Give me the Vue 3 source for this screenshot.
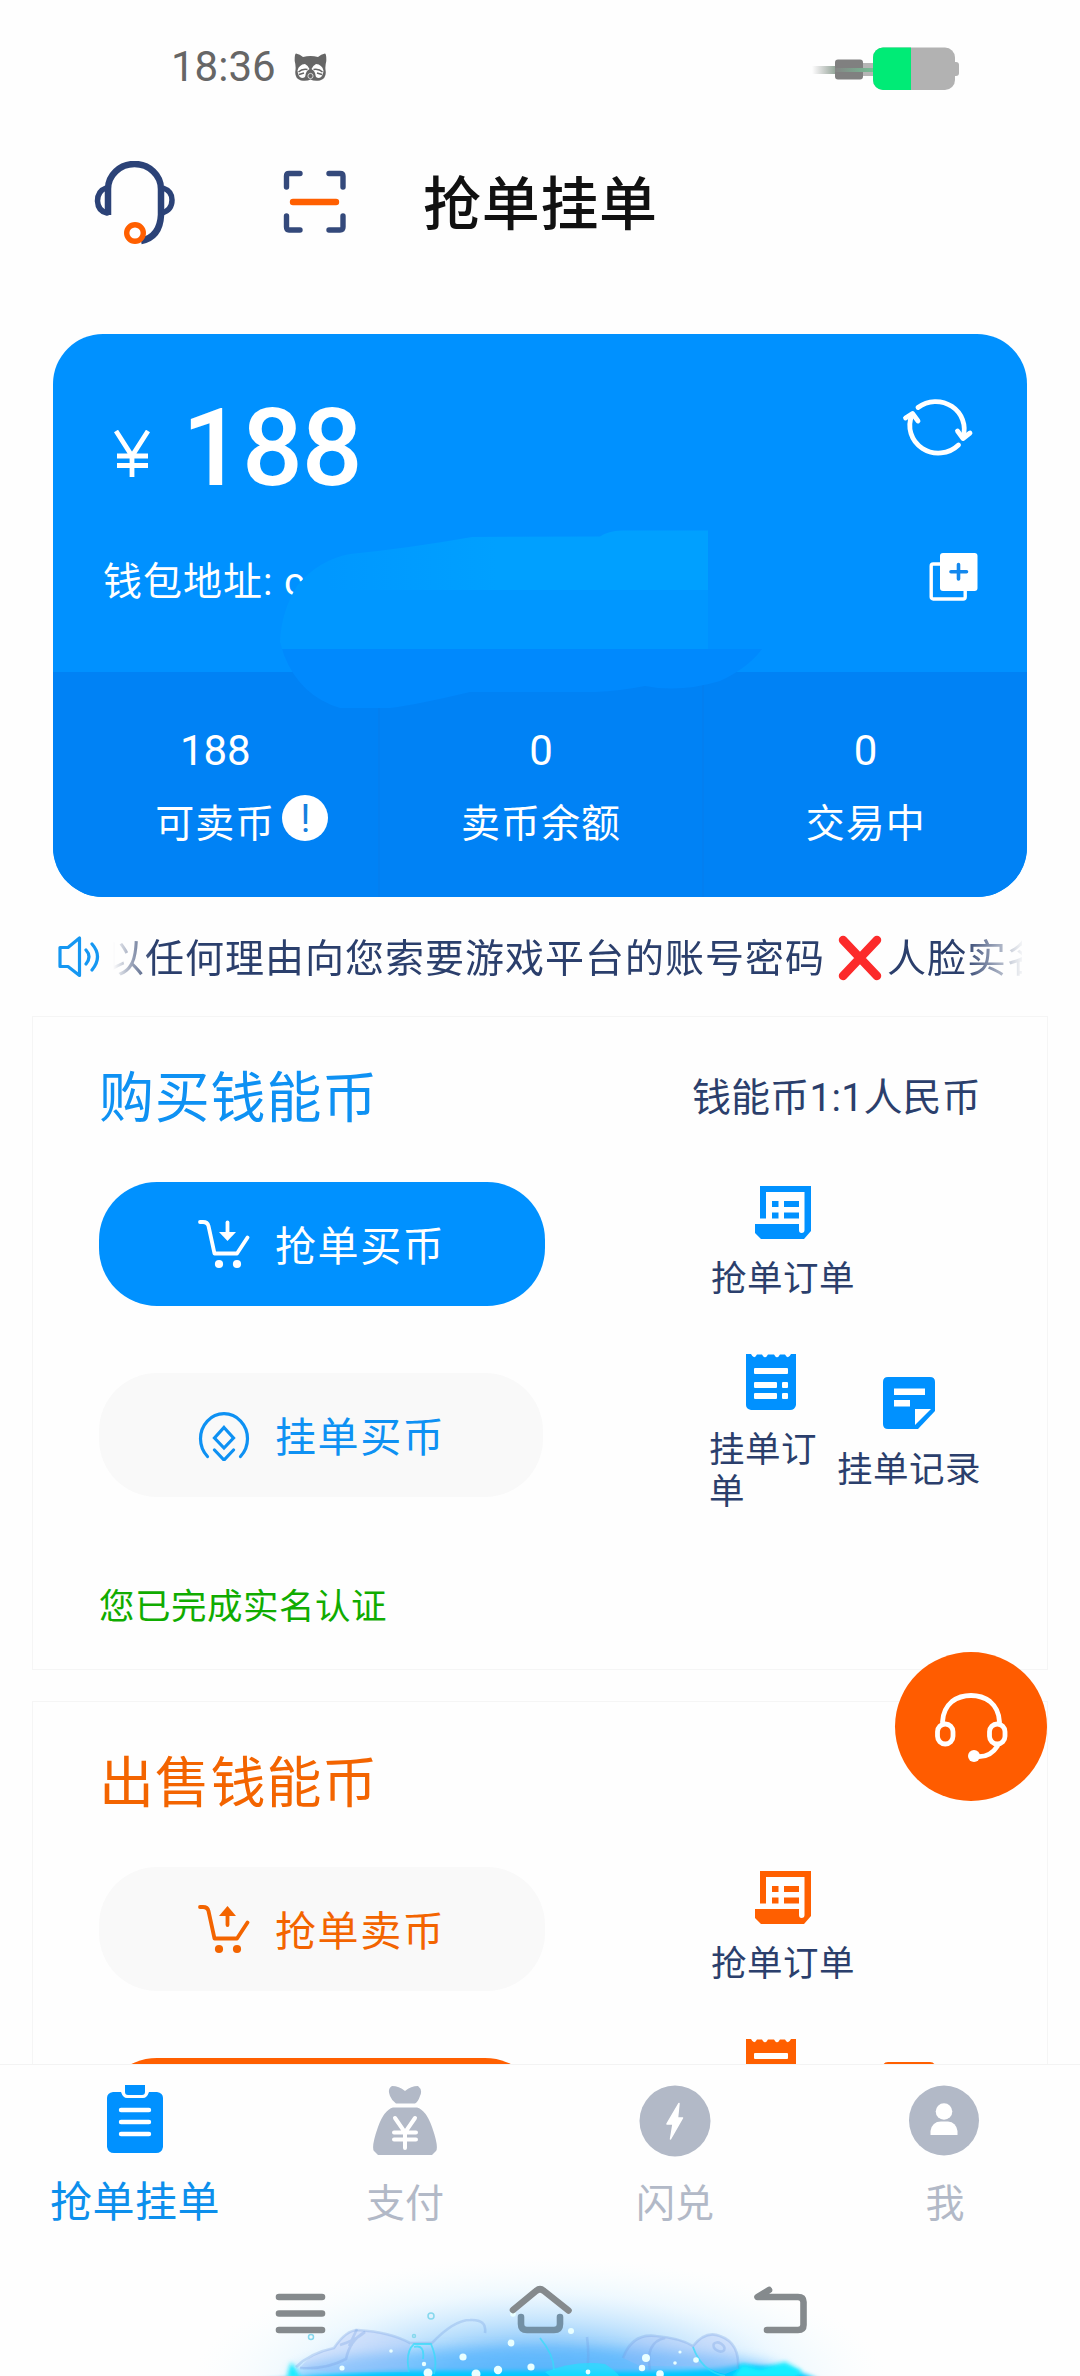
<script setup>
const stats = [
  { value: '188', label: '可卖币', info: true },
  { value: '0', label: '卖币余额' },
  { value: '0', label: '交易中' },
]

const sections = [
  {
    tone: 'buy',
    title: '购买钱能币',
    note: '钱能币1:1人民币',
    grab: { label: '抢单买币', filled: true },
    post: { label: '挂单买币', filled: false },
    status: '您已完成实名认证',
  },
  {
    tone: 'sell',
    title: '出售钱能币',
    note: '',
    grab: { label: '抢单卖币', filled: false },
    post: { label: '', filled: true },
    status: '',
  },
]

const bubbles = [
  [463, 2357, 3.6], [511, 2343, 3.4], [498, 2370, 4.2], [531, 2367, 3.6], [476, 2374, 4.5], [424, 2364, 2.2],
  [428, 2373, 4.5], [391, 2351, 1.8], [342, 2368, 2.6], [646, 2358, 4], [642, 2368, 3.2], [660, 2374, 3.8],
  [571, 2331, 3], [696, 2360, 2.8], [680, 2352, 1.6], [675, 2363, 1.8], [588, 2372, 2.4], [513, 2314, 2.8],
]
</script>

<template>
  <div class="page">
    <main class="scroll">
      <div class="status-bar">
        <span class="clock">18:36</span>
        <svg class="cat" width="33" height="28" viewBox="0 0 33 28">
          <path d="M2 .5 Q6 1 9 4 Q16.500 2 24 4 Q27 1 31 .5 Q32.500 1 32.300 8 Q31 13 31.500 17 Q33 25 26 27.500 Q20 28.500 16.500 26.500 Q13 28.500 7 27.500 Q0 25 1.500 17 Q2 13 .7 8 Q.5 1 2 .5Z" fill="#666" />
          <path d="M3.500 17.500 Q5 11.500 11 11 Q14 12.500 15.500 16 Q12 18 11.500 22 Q11.500 25 8 25 Q4 24 3.500 17.500Z M29.500 17.500 Q28 11.500 22 11 Q19 12.500 17.500 16 Q21 18 21.500 22 Q21.500 25 25 25 Q29 24 29.500 17.500Z" fill="#fff" />
          <path d="M4.500 19 Q8 15.500 13.500 16.500 M28.500 19 Q25 15.500 19.500 16.500 M5 21.500 L10 20 M28 21.500 L23 20" fill="none" stroke="#666" stroke-width="1.400" />
          <circle cx="16.500" cy="23" r="2.600" fill="#666" stroke="#eee" stroke-width=".8" />
        </svg>
        <svg class="battery" width="148" height="46" viewBox="812 46 148 46">
          <defs>
            <linearGradient id="tail"><stop offset="0" stop-color="#999" stop-opacity="0" /><stop offset="1" stop-color="#90a596" /></linearGradient>
            <linearGradient id="wire"><stop offset="0" stop-color="#858585" /><stop offset="1" stop-color="#75bd94" /></linearGradient>
            <clipPath id="cell"><rect x="873" y="47.500" width="82" height="42.500" rx="10" /></clipPath>
          </defs>
          <rect x="812" y="66" width="24" height="8" fill="url(#tail)" />
          <rect x="860" y="63" width="16" height="13" fill="#b5b5b5" />
          <rect x="835" y="59.500" width="28" height="20" rx="3" fill="#808080" />
          <rect x="835" y="68" width="38" height="4" fill="url(#wire)" />
          <rect x="950" y="62" width="9" height="14" rx="3" fill="#b2b2b2" />
          <g clip-path="url(#cell)">
            <rect x="873" y="47" width="82" height="44" fill="#b2b2b2" />
            <rect x="873" y="47" width="38" height="44" fill="#00eb76" />
          </g>
        </svg>
      </div>

      <header class="header">
        <svg class="headset" width="84" height="84" viewBox="94 160 84 84">
          <g fill="none" stroke="#2b4277" stroke-width="6.500">
            <path d="M108 214 V188 A26.500 25 0 0 1 161 188 V214 Q160 236 141 240" />
            <path d="M106 187 Q97.500 190 97.500 200 Q98 210 107 212" stroke-width="5.500" stroke-linecap="round" />
            <path d="M163 187 Q172 190 172 199 Q172 209 162 212" stroke-width="5.500" />
          </g>
          <circle cx="135" cy="232" r="8.300" fill="#fff" stroke="#ff5f00" stroke-width="5.400" />
        </svg>
        <svg class="scan" width="64" height="64" viewBox="283 170 64 64">
          <path d="M286.500 187 V176 Q286.500 173.500 289 173.500 H300 M329 173.500 H340 Q343 173.500 343 176 V187 M286.500 216 V227 Q286.500 230 289 230 H300 M329 230 H340 Q343 230 343 227 V216" fill="none" stroke="#34497b" stroke-width="5.400" stroke-linecap="round" stroke-linejoin="round" />
          <path d="M293 202 H336" stroke="#ff5f00" stroke-width="6.400" stroke-linecap="round" />
        </svg>
        <h1 class="title">抢单挂单</h1>
      </header>

      <section class="wallet">
        <div class="wallet-top">
          <div class="balance">
            <svg class="yen" width="36" height="48" viewBox="0 0 36 48">
              <path d="M2 1 L18 26 L34 1 M18 26 V47 M3 26 H34 M3 35.500 H34" fill="none" stroke="#fff" stroke-width="4.800" />
            </svg>
            <strong class="amount">188</strong>
            <svg class="refresh" width="72" height="66" viewBox="902 394 72 66">
              <g fill="none" stroke="#fff" stroke-width="4.800" stroke-linecap="round" stroke-linejoin="round">
                <path d="M918 408.500 A28.500 27.500 0 0 1 963 438 M905.500 419 L912.500 414.500 L918 422" />
                <path d="M958.500 446 A28.500 27.500 0 0 1 912 416 M957.500 432 L963 439.500 L970 434" />
              </g>
            </svg>
          </div>
          <div class="address">
            <span>钱包地址: c</span>
            <svg class="copy" width="50" height="50" viewBox="0 0 50 50">
              <rect x="2.200" y="12" width="34" height="35" rx="2" fill="none" stroke="#fff" stroke-width="3.400" />
              <rect x="11" y="1" width="37.500" height="38" rx="3" fill="#fff" />
              <path d="M29.500 12.500 V27 M22 19.700 H37.500" stroke="#1388ee" stroke-width="3.600" stroke-linecap="round" />
            </svg>
          </div>
        </div>
        <div class="stats">
          <div v-for="stat in stats" :key="stat.label" class="stat">
            <span class="stat-value">{{ stat.value }}</span>
            <span class="stat-label">{{ stat.label }}<i v-if="stat.info" class="info">!</i></span>
          </div>
        </div>
        <svg class="smudge" width="482" height="178" viewBox="280 530 482 178">
          <defs>
            <clipPath id="blot">
              <path d="M280 642 Q281 612 297 586 Q318 560 350 554 Q410 548 472 537 L600 536.500 Q608 531 622 530.500 H708 V649 H762 Q748 668 720 681 Q680 693 645 686 Q620 691 595 692 H470 Q420 704 390 708 H340 Q300 696 284 655Z" />
            </clipPath>
            <linearGradient id="band">
              <stop offset=".1" stop-color="#0098ff" />
              <stop offset=".45" stop-color="#00a0ff" />
            </linearGradient>
          </defs>
          <g clip-path="url(#blot)">
            <rect x="280" y="530" width="482" height="60" fill="url(#band)" />
            <rect x="280" y="590" width="482" height="59" fill="#0097ff" />
            <rect x="280" y="649" width="482" height="60" fill="#0089fd" />
          </g>
        </svg>
      </section>

      <div class="notice">
        <svg width="44" height="42" viewBox="0 0 44 42">
          <g fill="none" stroke="#1597f2" stroke-width="3.200" stroke-linejoin="round" stroke-linecap="round">
            <path d="M2 11.500 H10 L21.500 2 V39.500 L10 30.500 H2Z" />
            <path d="M28 14 Q34 20.500 28 28 M34 8 Q45 20.500 34 34" />
          </g>
        </svg>
        <div class="ticker">
          <span>以任何理由向您索要游戏平台的账号密码</span>
          <svg class="cross" width="46" height="46" viewBox="0 0 46 46">
            <path d="M6 5 L40 41 M40 5 L6 41" stroke="#fc2b2b" stroke-width="8.500" stroke-linecap="round" />
          </svg>
          <span>人脸实名</span>
        </div>
      </div>

      <section v-for="s in sections" :key="s.tone" class="panel" :class="s.tone">
        <div class="panel-head">
          <h2>{{ s.title }}</h2>
          <span class="note">{{ s.note }}</span>
        </div>

        <div class="row">
          <button class="pill" :class="{ filled: s.grab.filled }">
            <svg width="52" height="50" viewBox="0 0 52 50">
              <g fill="none" stroke="currentColor" stroke-width="3.800" stroke-linecap="round" stroke-linejoin="round">
                <path d="M2 3 H5 Q9.500 3 10.500 7 L16.500 34.500 H39 L49.500 18.500" />
                <path :d="s.tone === 'buy' ? 'M29.500 3.500 V14' : 'M29.500 12 V21'" />
              </g>
              <path :d="s.tone === 'buy' ? 'M21 13 H38 L29.500 22Z' : 'M21 12 H38 L29.500 2Z'" fill="currentColor" />
              <circle cx="21" cy="45" r="4.100" fill="currentColor" />
              <circle cx="39" cy="45" r="4.100" fill="currentColor" />
            </svg>
            <span>{{ s.grab.label }}</span>
          </button>
          <div class="links">
            <a class="link">
              <svg width="58" height="56" viewBox="0 0 58 56">
                <path fill="currentColor" fill-rule="evenodd" d="M6 1 H57 V46 L50 54 H7 L1 48 V39 H45 V45 Q45 48 47.500 48 Q50.500 48 50.500 45 V7 H12 V33.500 H6Z" />
                <path fill="currentColor" d="M18 16 h6.500 v6 h-6.500z M30 16 h15 v6 h-15z M18 27.500 h6.500 v6 h-6.500z M30 27.500 h15 v6 h-15z" />
              </svg>
              <span>抢单订单</span>
            </a>
          </div>
        </div>

        <div class="row second">
          <button class="pill" :class="{ filled: s.post.filled }">
            <svg width="52" height="52" viewBox="0 0 52 52">
              <g fill="none" stroke="currentColor" stroke-width="3.200" stroke-linecap="round" stroke-linejoin="miter">
                <path d="M9.500 47.500 A23.500 25 0 1 1 42.500 47.500" />
                <path d="M26 18.500 L35.500 29 L26 39 L16.500 29Z M16.500 41 L26 51 L35.500 41" />
              </g>
            </svg>
            <span>{{ s.post.label }}</span>
          </button>
          <div class="links">
            <a class="link narrow">
              <svg width="52" height="58" viewBox="0 0 52 58">
                <path fill="currentColor" d="M1 1 H6 Q9 7 12 1.500 H17 Q20 7 23 1.500 H29 Q32 7 35 1.500 H40 Q43 7 46 1 H51 V52 Q50 57 45 57 H6 Q1 56 1 52Z" />
                <g fill="#fff">
                  <rect x="9" y="15" width="34" height="6" rx="1" />
                  <rect x="9" y="29" width="23" height="6" rx="1" />
                  <rect x="37" y="29" width="6" height="6" rx="1" />
                  <rect x="9" y="40" width="23" height="6" rx="1" />
                  <rect x="37" y="40" width="6" height="6" rx="1" />
                </g>
              </svg>
              <span>{{ s.tone === 'buy' ? '挂单订单' : '' }}</span>
            </a>
            <a class="link">
              <svg width="54" height="54" viewBox="0 0 54 54">
                <path fill="currentColor" d="M6 1 H48 Q53 1 53 6 V35 L36 53 H6 Q1 53 1 48 V6 Q1 1 6 1Z" />
                <path fill="#fff" d="M12 12.500 H43 V19 H12Z M12 24 H28 V30.500 H12Z M33 33 H49 L33 49Z" />
              </svg>
              <span class="wide">{{ s.tone === 'buy' ? '挂单记录' : '' }}</span>
            </a>
          </div>
        </div>
        <p v-if="s.status" class="verified">{{ s.status }}</p>
      </section>
    </main>

    <nav class="tabs">
      <a class="tab active">
        <svg width="58" height="70" viewBox="0 0 58 70">
          <path fill="currentColor" d="M7 8 H15 Q17 14 21 14 H37 Q41 14 43 8 H51 Q57 9 57 14 V63 Q56 69 50 69 H8 Q2 69 1 63 V14 Q1 9 7 8Z M19 1 H39 V8 Q39 11 36 11 H22 Q19 11 19 8Z" />
          <path d="M15 26 H43 M15 38 H43 M15 50 H43" stroke="#fff" stroke-width="4.400" stroke-linecap="round" />
        </svg>
        <span>抢单挂单</span>
      </a>
      <a class="tab">
        <svg width="66" height="70" viewBox="0 0 66 70">
          <path fill="currentColor" d="M20 0 Q27 0 33 5 Q39 0 46 0 Q51 4 48 10 Q46 16 43 17.500 H24 Q20 15 18 10 Q15 3 20 0Z M21 21.500 H45 Q54 24 60 41 Q67 61 64 65 L60 69 H6 L2 65 Q-1 61 6 41 Q12 24 21 21.500Z" />
          <path d="M23 32 L33 46.500 L43 32 M33 46.500 V62 M22 46.500 H44 M22 53.500 H44" fill="none" stroke="#fff" stroke-width="4" stroke-linecap="round" />
        </svg>
        <span>支付</span>
      </a>
      <a class="tab">
        <svg width="72" height="72" viewBox="0 0 72 72">
          <circle cx="36" cy="36" r="35.500" fill="currentColor" />
          <path fill="#fff" stroke="#fff" stroke-width="1.500" stroke-linejoin="round" d="M40 18.500 L28 39 H34 L31.500 54 L43.500 33 H38.500Z" />
        </svg>
        <span>闪兑</span>
      </a>
      <a class="tab">
        <svg width="72" height="72" viewBox="0 0 72 72">
          <circle cx="35" cy="35.500" r="35" fill="currentColor" />
          <circle cx="35" cy="26.500" r="8.300" fill="#fff" />
          <path fill="#fff" d="M21.500 50 V46 Q23 36.500 32 36.500 H39 Q47 37 48.500 46 V50Z" />
        </svg>
        <span>我</span>
      </a>
    </nav>

    <footer class="system">
      <svg class="glow" width="1080" height="156" viewBox="0 2220 1080 156">
        <defs>
          <radialGradient id="haze" cx="0" cy="0" r="350" gradientUnits="userSpaceOnUse" gradientTransform="translate(540 2386) scale(1 .37)">
            <stop offset="0" stop-color="#58aef8" />
            <stop offset=".3" stop-color="#84c5fb" />
            <stop offset=".5" stop-color="#b9dffd" stop-opacity=".85" />
            <stop offset=".72" stop-color="#e2f4ff" stop-opacity=".55" />
            <stop offset="1" stop-color="#f4fdff" stop-opacity="0" />
          </radialGradient>
          <filter id="soft" x="-20%" y="-80%" width="140%" height="260%"><feGaussianBlur stdDeviation="6" /></filter>
          <filter id="blur" x="-10%" y="-80%" width="120%" height="260%"><feGaussianBlur stdDeviation="2" /></filter>
        </defs>
        <ellipse cx="540" cy="2386" rx="350" ry="130" fill="url(#haze)" />
        <ellipse cx="540" cy="2374" rx="250" ry="26" fill="#4fb4ff" opacity=".55" filter="url(#soft)" />
        <path d="M250 2382 Q300 2375 400 2371 H560 Q700 2374 740 2365 Q790 2365 820 2380Z" fill="#00c8ff" filter="url(#blur)" />
        <path d="M732 2378 L742 2364 L760 2369 L785 2362 L802 2371 L796 2378Z M287 2378 L291 2362 L301 2378Z" fill="#12edff" filter="url(#blur)" />
        <g fill="#a3b6f5" fill-opacity=".3">
          <path d="M300 2368 Q310 2353 334 2348 Q346 2330 358 2330 Q390 2332 410 2343 L409 2372 H330Z" />
          <path d="M693 2346 Q706 2330 720 2336 Q740 2343 738 2369 L725 2374 Q702 2370 693 2346Z" />
          <path d="M623 2358 Q632 2333 656 2336 Q680 2338 693 2346 L700 2366 H640Z" />
        </g>
        <g fill="none" stroke="#729be0" stroke-opacity=".3" stroke-width="2.600">
          <path d="M296 2367 Q310 2353 334 2348 Q346 2330 358 2330 Q390 2332 410 2343 L432 2343 Q454 2320 470 2320 Q487 2319 485 2333" />
          <path d="M340 2345 Q356 2340 365 2332 Q350 2340 346 2359 Q325 2370 300 2368 M357 2329 L349 2346" />
          <path d="M623 2358 Q632 2333 656 2336 Q680 2338 693 2346 Q706 2330 720 2336 Q740 2343 738 2369 M650 2370 Q645 2342 665 2338" />
          <ellipse cx="719" cy="2347" rx="6" ry="4" transform="rotate(30 719 2347)" />
          <path d="M586 2376 Q590 2360 587 2337" />
        </g>
        <path d="M409 2372 Q405 2352 414 2344 H431 Q438 2360 434 2374 M414 2347 Q425 2344 423 2359 M693 2347 Q702 2372 725 2376 M540 2338 Q554 2355 554 2370" fill="none" stroke="#35dcfa" stroke-opacity=".75" stroke-width="1.800" />
        <path d="M545 2372 Q575 2360 605 2364 Q617 2372 619 2376 H550Z" fill="#20e4ff" opacity=".65" />
        <g fill="#e9ffff">
          <circle v-for="(b, i) in bubbles" :key="i" :cx="b[0]" :cy="b[1]" :r="b[2]" />
        </g>
        <g fill="none" stroke="#86d8ed" stroke-width="1.500">
          <circle cx="431" cy="2316" r="3" /><circle cx="311" cy="2337" r="2.500" /><circle cx="414" cy="2336" r="1.500" />
        </g>
        <g fill="none" stroke="#858a8d" stroke-width="6.600" stroke-linecap="round" stroke-linejoin="round">
          <path d="M279 2297 H322 M279 2313.500 H322 M279 2330 H322" />
          <path d="M513 2310 L536 2291 Q540 2287.500 544 2291 L568.500 2310.500" />
          <path d="M521 2317 V2324 Q521 2330 527 2330 H554 Q560 2330 560 2324 V2317" stroke="#7390a5" />
          <path d="M769 2290 L757.500 2297 H798 Q803.500 2297 803.500 2302 V2325 Q803.500 2330 798 2330 H767" />
        </g>
      </svg>
    </footer>

    <button class="support">
      <svg width="74" height="72" viewBox="934 1690 74 72">
        <g fill="none" stroke="#fff" stroke-width="4.800" stroke-linecap="round">
          <path d="M942.500 1721 Q943 1708 952 1700.500 Q960 1694.500 971 1694.500 Q982 1694.500 990 1700.500 Q999 1708 999.500 1721" />
          <rect x="937.500" y="1723" width="15.500" height="20" rx="7.700" />
          <rect x="989.500" y="1723" width="15.500" height="20" rx="7.700" />
          <path d="M997.500 1745 Q990 1757 976 1755.500" />
        </g>
        <circle cx="974" cy="1755" r="6" fill="#fff" />
      </svg>
    </button>
  </div>
</template>

<style>
body {
  margin: 0;
  background: #fefefe;
}
</style>

<style scoped>
.page {
  width: 1080px;
  height: 2376px;
  display: flex;
  flex-direction: column;
  overflow: hidden;
  background: #fefefe;
  font-family: Roboto, "Noto Sans CJK SC", sans-serif;
  color: #2b3f6c;
  position: relative;
}
svg {
  display: block;
  flex: none;
}
.scroll {
  height: 2064px;
  overflow: hidden;
  flex: none;
}
.status-bar {
  box-sizing: border-box;
  height: 132px;
  display: flex;
  align-items: center;
  padding: 2px 120px 0 171px;
}
.clock {
  font-size: 42px;
  line-height: 48px;
  color: #666;
  width: 123px;
}
.battery {
  margin-left: auto;
  margin-top: 4px;
}
.header {
  height: 142px;
  display: flex;
  align-items: center;
  padding-left: 94px;
}
.scan {
  margin-left: 105px;
  margin-top: -2px;
}
.title {
  margin: 4px 0 0 76px;
  font-size: 58px;
  line-height: 64px;
  font-weight: 500;
  letter-spacing: .7px;
  color: #111;
}
.wallet {
  position: relative;
  margin: 60px 53px 0;
  height: 563px;
  border-radius: 50px;
  overflow: hidden;
  background: #0091ff;
  color: #fff;
}
.wallet-top {
  box-sizing: border-box;
  height: 338px;
  padding: 66px 50px 0;
}
.balance {
  height: 92px;
  display: flex;
  align-items: center;
}
.yen {
  margin: 16px 0 0 11px;
}
.amount {
  margin: 6px 0 0 32px;
  font-size: 107px;
  line-height: 92px;
  font-weight: 500;
  letter-spacing: -.9px;
}
.refresh {
  margin: -40px 3px 0 auto;
}
.address {
  margin-top: 56px;
  height: 60px;
  display: flex;
  align-items: center;
  justify-content: space-between;
  font-size: 39px;
  letter-spacing: 1px;
}
.copy {
  margin: -3px -2px 0 0;
}
.smudge {
  position: absolute;
  left: 227px;
  top: 196px;
}
.stats {
  height: 225px;
  display: grid;
  grid-template-columns: repeat(3, 1fr);
  background: #0082f5;
}
.stat {
  display: flex;
  flex-direction: column;
  align-items: center;
  padding-top: 54px;
}
.stat + .stat {
  border-left: 2px solid #037ff0;
}
.stat-value {
  font-size: 42px;
  line-height: 50px;
}
.stat-label {
  position: relative;
  font-size: 39px;
  line-height: 48px;
  letter-spacing: 1px;
  margin-top: 24px;
}
.info {
  position: absolute;
  left: 127px;
  top: -5px;
  width: 46px;
  height: 46px;
  border-radius: 50%;
  background: #fff;
  color: #1580df;
  font-style: normal;
  font-size: 38px;
  line-height: 48px;
  text-align: center;
  letter-spacing: 0;
}
.notice {
  height: 119px;
  display: flex;
  align-items: center;
  padding: 0 58px;
}
.ticker {
  width: 912px;
  margin-left: 11px;
  display: flex;
  align-items: center;
  overflow: hidden;
  white-space: nowrap;
  font-size: 39px;
  line-height: 50px;
  letter-spacing: 1px;
  -webkit-mask-image: linear-gradient(90deg, transparent, #000 40px, #000 850px, transparent 912px);
  mask-image: linear-gradient(90deg, transparent, #000 40px, #000 850px, transparent 912px);
}
.ticker span {
  padding-top: 5px;
}
.ticker span:first-child {
  margin-left: -8px;
}
.cross {
  margin: 2px 4px 0 12px;
}
.panel {
  box-sizing: border-box;
  width: 1016px;
  height: 654px;
  margin: 0 32px 31px;
  padding: 48px 66px 0 66px;
  border: 1px solid #f5f5f5;
}
.panel-head {
  height: 64px;
  display: flex;
  align-items: center;
  justify-content: space-between;
}
h2 {
  margin: 1px 0 0;
  font-size: 55px;
  line-height: 64px;
  font-weight: 400;
  letter-spacing: .8px;
}
.note {
  font-size: 39px;
  line-height: 50px;
  letter-spacing: .2px;
  margin-top: 1px;
}
.buy h2,
.buy .pill {
  color: #0e91f3;
}
.buy .link svg {
  color: #0091ff;
}
.sell h2,
.sell .pill {
  color: #f36400;
}
.sell .link svg {
  color: #ff5f00;
}
.row {
  display: flex;
  height: 124px;
  margin-top: 53px;
}
.row.second {
  margin-top: 67px;
}
.pill {
  box-sizing: border-box;
  width: 446px;
  height: 124px;
  border: 0;
  border-radius: 58px;
  background: #f9f9f9;
  display: flex;
  align-items: center;
  padding: 0 0 0 99px;
  font: 400 41px/50px Roboto, "Noto Sans CJK SC", sans-serif;
  letter-spacing: 1.600px;
}
.pill span {
  margin: 5px 0 0 25px;
}
.buy .pill.filled {
  background: #0091ff;
  color: #fff;
}
.sell .pill.filled {
  background: #ff5f00;
  color: #fff;
}
.links {
  margin: -2px 0 0 166px;
  display: flex;
  align-items: center;
  height: 124px;
}
.link {
  display: flex;
  flex-direction: column;
  align-items: center;
  font-size: 35.500px;
  line-height: 42px;
  letter-spacing: .5px;
}
.link span {
  margin-top: 17px;
  min-height: 42px;
}
.link.narrow {
  width: 124px;
  margin-right: 4px;
}
.link.narrow span {
  width: 124px;
  min-height: 84px;
  margin-top: 18px;
}
.link .wide {
  width: 144px;
  margin-top: 19px;
  white-space: nowrap;
}
.verified {
  margin: 86px 0 0;
  font-size: 35.500px;
  line-height: 48px;
  letter-spacing: .5px;
  color: #10ac00;
}
.tabs {
  box-sizing: border-box;
  height: 184px;
  border-top: 1px solid #f3f3f3;
  display: grid;
  grid-template-columns: repeat(4, 270px);
  background: #fefefe;
  color: #b2b9c7;
}
.tab {
  display: flex;
  flex-direction: column;
  align-items: center;
  padding-top: 20px;
  font-size: 39px;
  line-height: 50px;
}
.tab svg {
  height: 72px;
}
.tab span {
  margin-top: 22px;
}
.tab.active {
  font-size: 42px;
  color: #0091ff;
  letter-spacing: .5px;
}
.tab.active svg {
  margin-top: -2px;
}
.tab.active span {
  margin-top: 23px;
  color: #0c8fec;
}
.system {
  height: 128px;
  position: relative;
}
.glow {
  position: absolute;
  left: 0;
  bottom: 0;
}
.support {
  position: absolute;
  left: 895px;
  top: 1652px;
  width: 152px;
  height: 149px;
  padding: 0;
  border: 0;
  border-radius: 50%;
  background: #ff5c00;
  display: flex;
  align-items: center;
  justify-content: center;
}
</style>
